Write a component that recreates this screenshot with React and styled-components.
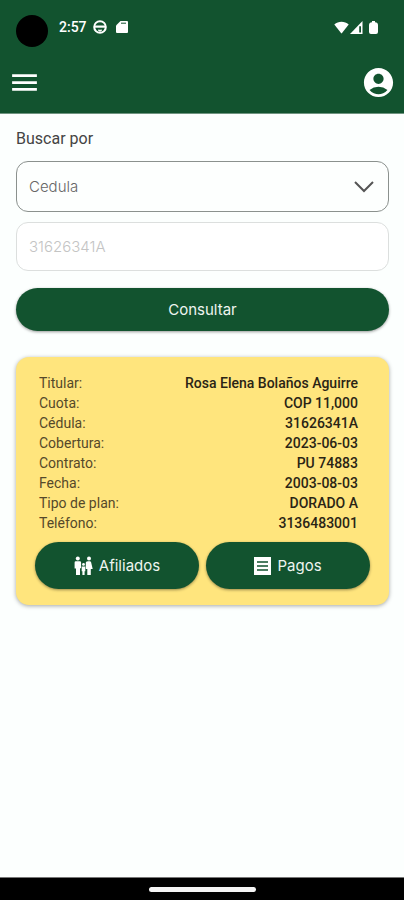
import React from "react";
import styled, { createGlobalStyle } from "styled-components";
import { MdMenu, MdAccountCircle } from "react-icons/md";

const GlobalStyle = createGlobalStyle`
  *, *::before, *::after { box-sizing: border-box; }
  body { margin: 0; background: #fcfffe; }
  button, input, select { font: inherit; }
`;

const green = "#12532f";

const Screen = styled.div`
  min-height: 100vh;
  display: flex;
  flex-direction: column;
  font-family: Roboto, sans-serif;
  color: #2b2b2b;
`;

const Header = styled.header`
  background: ${green};
  color: #fff;
  border-bottom: 1px solid #6f9480;
`;

const StatusBar = styled.div`
  height: 52px;
  padding: 2px 26px 0 16px;
  display: flex;
  align-items: center;
  justify-content: space-between;
`;

const StatusGroup = styled.div`
  display: flex;
  align-items: center;
  gap: ${(p) => p.$gap}px;
`;

const Camera = styled.span`
  width: 32px;
  height: 32px;
  margin: 8px 5px 0 0;
  border-radius: 50%;
  background: #000;
`;

const Clock = styled.span`
  font-size: 14px;
  font-weight: 500;
  line-height: 16px;
`;

const Toolbar = styled.nav`
  height: 61px;
  padding: 0 8px;
  display: flex;
  align-items: center;
  justify-content: space-between;
`;

const IconButton = styled.button`
  display: flex;
  padding: 0;
  border: 0;
  background: none;
  color: inherit;
  cursor: pointer;
`;

const Main = styled.main`
  flex: 1;
  padding: 15px 15px 24px 16px;
`;

const SearchForm = styled.form`
  display: flex;
  flex-direction: column;
`;

const FieldLabel = styled.label`
  margin-bottom: 12px;
  font-size: 16px;
  line-height: 20px;
  color: #444;
`;

const SelectWrap = styled.div`
  display: grid;
  align-items: center;
  margin-bottom: 10px;

  & > * { grid-area: 1 / 1; }
  & > svg { justify-self: end; margin-right: 15px; pointer-events: none; }
`;

const Select = styled.select`
  appearance: none;
  width: 100%;
  height: 51px;
  padding: 0 48px 0 12px;
  border: 1px solid #8b918e;
  border-radius: 12px;
  background: #fdfffe;
  color: #666;
  font-family: Inter, sans-serif;
  font-size: 15px;
  font-weight: 300;
`;

const TextInput = styled.input`
  width: 100%;
  height: 49px;
  margin-bottom: 17px;
  padding: 0 12px;
  border: 1px solid #dcdfde;
  border-radius: 12px;
  background: #fff;
  font-family: Inter, sans-serif;
  font-size: 15px;
  font-weight: 300;

  &::placeholder { color: #c4c4c4; opacity: 1; }
`;

const PillButton = styled.button`
  flex: 1;
  min-height: ${(p) => p.$height}px;
  padding: 0;
  display: flex;
  align-items: center;
  justify-content: center;
  gap: 6px;
  border: 0;
  border-radius: 24px;
  background: ${green};
  color: #eef5f0;
  font-family: Inter, sans-serif;
  font-size: 15px;
  line-height: 20px;
  box-shadow: 0 1px 3px rgba(0, 0, 0, 0.4);
  cursor: pointer;
`;

const Card = styled.section`
  margin-top: 26px;
  padding: 16px 19px;
  border-radius: 13px;
  background: #ffe57d;
  box-shadow: 0 1px 4px rgba(0, 0, 0, 0.35);
`;

const Details = styled.dl`
  margin: 0 12px 9px 4px;
`;

const DetailRow = styled.div`
  display: flex;
  justify-content: space-between;
  font-size: 14px;
  line-height: 20px;
`;

const Term = styled.dt`
  color: #55492a;
`;

const Value = styled.dd`
  margin: 0;
  color: #2a2415;
  font-weight: 500;
`;

const Actions = styled.div`
  display: flex;
  gap: 7px;
`;

const NavigationBar = styled.footer`
  height: 23px;
  display: flex;
  align-items: center;
  justify-content: center;
  background: #000;
  border-top: 1px solid #777;
`;

const HomeHandle = styled.span`
  width: 107px;
  height: 5px;
  border-radius: 3px;
  background: #f5f5f5;
`;

const WheelIcon = () => (
  <svg width="14" height="14" viewBox="0 0 14 14" fill="none" stroke="#fff" aria-hidden="true">
    <circle cx="7" cy="7" r="5.8" strokeWidth="2" />
    <path d="M2 6.600h10" strokeWidth="2.200" />
    <path d="M5 10h4L7 11.500z" fill="#fff" strokeWidth="0.600" />
  </svg>
);

const CardIcon = () => (
  <svg width="12" height="14" viewBox="0 0 12 14" aria-hidden="true">
    <path fill="#fff" d="M4.500 1H11q1 0 1 1v10q0 1-1 1H1q-1 0-1-1V5.500z" />
    <path stroke={green} strokeWidth="1" d="M5 3.200h5" />
  </svg>
);

const WifiIcon = () => (
  <svg width="15" height="13" viewBox="0 0 15 13" aria-hidden="true">
    <path fill="#fff" d="M0.3 3.4C4.4-.2 10.6-.2 14.7 3.4L8 12.1q-.5.6-1 0z" />
  </svg>
);

const SignalIcon = () => (
  <svg width="13" height="13" viewBox="0 0 13 13" aria-hidden="true">
    <path fill="#fff" d="M12.500 0v13H0z" />
    <path fill={green} d="M9.200 5.200h1.800v6.400H9.200z" />
  </svg>
);

const BatteryIcon = () => (
  <svg width="9" height="13" viewBox="0 0 9 13" aria-hidden="true">
    <path fill="#fff" d="M3 0h3v1.200q3 .2 3 3V11q0 2-2 2H2q-2 0-2-2V4.200q0-2.800 3-3z" />
  </svg>
);

const ChevronIcon = () => (
  <svg width="20" height="12" viewBox="0 0 20 12" fill="none" stroke="#555" strokeWidth="2" aria-hidden="true">
    <path d="M1 1l9 9 9-9" />
  </svg>
);

const FamilyIcon = () => (
  <svg width="19" height="20" viewBox="0 0 19 20" fill="#fff" aria-hidden="true">
    <circle cx="3.800" cy="2.500" r="2" />
    <path d="M1.800 5.300h4q1.300 0 1.300 1.300v5.600H6v6.800H2v-6.600H.6V6.600q0-1.300 1.200-1.300z" />
    <circle cx="15" cy="2.500" r="2" />
    <path d="M14.200 5.300h1.600q1 0 1.300 1l1.600 6.700h-1.900v6h-3.500v-6h-1.500V6.500q.4-1.200 2.400-1.200z" />
    <circle cx="9.500" cy="8.400" r="1.400" />
    <path d="M7.700 10.500h3.600v4.700h-.7v3.800H8.400v-3.800h-.7z" />
  </svg>
);

const ReceiptIcon = () => (
  <svg width="17" height="18" viewBox="0 0 17 18" aria-hidden="true">
    <path fill="#fff" d="M0 0h17v18H0z" />
    <path stroke={green} strokeWidth="1.500" d="M3 5h11M3 9h11M3 13h11" />
  </svg>
);

const details = [
  ["Titular:", "Rosa Elena Bolaños Aguirre"],
  ["Cuota:", "COP 11,000"],
  ["Cédula:", "31626341A"],
  ["Cobertura:", "2023-06-03"],
  ["Contrato:", "PU 74883"],
  ["Fecha:", "2003-08-03"],
  ["Tipo de plan:", "DORADO A"],
  ["Teléfono:", "3136483001"],
];

export default function App() {
  return (
    <Screen>
      <GlobalStyle />
      <Header>
        <StatusBar>
          <StatusGroup $gap={9}>
            <StatusGroup $gap={6}>
              <Camera />
              <Clock>2:57</Clock>
              <WheelIcon />
            </StatusGroup>
            <CardIcon />
          </StatusGroup>
          <StatusGroup $gap={6}>
            <StatusGroup $gap={1}>
              <WifiIcon />
              <SignalIcon />
            </StatusGroup>
            <BatteryIcon />
          </StatusGroup>
        </StatusBar>
        <Toolbar>
          <IconButton type="button" aria-label="Menú">
            <MdMenu size={33} />
          </IconButton>
          <IconButton type="button" aria-label="Cuenta">
            <MdAccountCircle size={35} />
          </IconButton>
        </Toolbar>
      </Header>
      <Main>
        <SearchForm onSubmit={(e) => e.preventDefault()}>
          <FieldLabel htmlFor="criterio">Buscar por</FieldLabel>
          <SelectWrap>
            <Select id="criterio" defaultValue="cedula">
              <option value="cedula">Cedula</option>
            </Select>
            <ChevronIcon />
          </SelectWrap>
          <TextInput type="text" aria-label="Cedula" placeholder="31626341A" />
          <PillButton type="submit" $height={43}>Consultar</PillButton>
        </SearchForm>
        <Card>
          <Details>
            {details.map(([term, value]) => (
              <DetailRow key={term}>
                <Term>{term}</Term>
                <Value>{value}</Value>
              </DetailRow>
            ))}
          </Details>
          <Actions>
            <PillButton type="button" $height={47}>
              <FamilyIcon />
              Afiliados
            </PillButton>
            <PillButton type="button" $height={47}>
              <ReceiptIcon />
              Pagos
            </PillButton>
          </Actions>
        </Card>
      </Main>
      <NavigationBar>
        <HomeHandle />
      </NavigationBar>
    </Screen>
  );
}
